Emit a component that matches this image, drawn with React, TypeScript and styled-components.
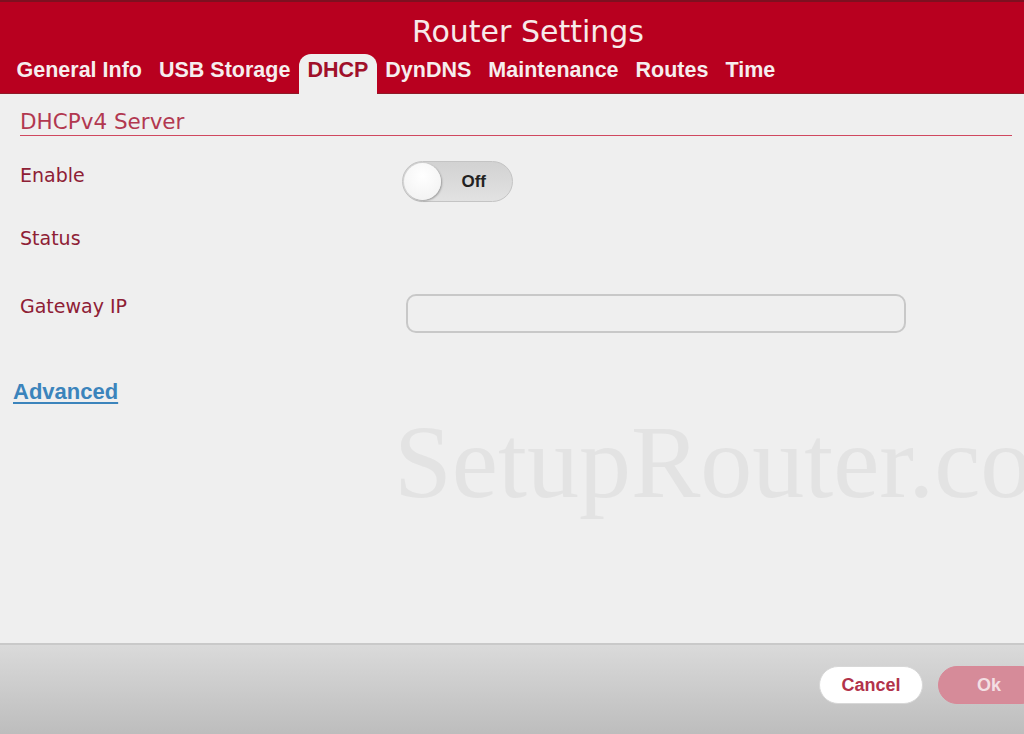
import React from 'react';
import styled, { createGlobalStyle } from 'styled-components';

const GlobalStyle = createGlobalStyle`
  html, body {
    margin: 0;
    padding: 0;
    height: 100%;
    background: #efefef;
    overflow: hidden;
  }
  #root {
    height: 100%;
  }
`;

const Page = styled.div`
  position: relative;
  display: flex;
  flex-direction: column;
  width: 1024px;
  height: 734px;
  overflow: hidden;
  background: #efefef;
`;

const Header = styled.header`
  display: flex;
  flex-direction: column;
  height: 94px;
  box-sizing: border-box;
  background: #b8001f;
  border-top: 2px solid #7d1020;
  border-bottom: 1px solid #8e1a28;
`;

const Title = styled.h1`
  margin: 0;
  padding: 11px 0 0 32px;
  height: 39px;
  box-sizing: border-box;
  text-align: center;
  font-family: 'DejaVu Sans', Verdana, sans-serif;
  font-weight: normal;
  font-size: 30px;
  line-height: 38px;
  color: #f7eaea;
`;

const Tabs = styled.nav`
  display: flex;
  align-items: flex-end;
  padding: 0 0 0 8px;
  margin-top: 13px;
  flex: 1;
`;

const Tab = styled.span<{ $active?: boolean }>`
  padding: 0 8.5px 7px;
  height: 40px;
  box-sizing: border-box;
  display: flex;
  align-items: center;
  font-family: 'Liberation Sans', Arial, sans-serif;
  font-weight: bold;
  font-size: 21.5px;
  color: ${p => (p.$active ? '#a0102a' : '#f6eeee')};
  background: ${p => (p.$active ? '#efefef' : 'transparent')};
  border-radius: ${p => (p.$active ? '12px 12px 0 0' : '0')};
  margin-bottom: -1px;
`;

const Content = styled.main`
  flex: 1;
  padding: 16px 12px 0 13px;
`;

const Section = styled.div`
  padding-left: 7px;
`;

const SectionTitle = styled.h2`
  margin: 0;
  font-family: 'DejaVu Sans', Verdana, sans-serif;
  font-weight: normal;
  font-size: 21.5px;
  line-height: 24px;
  color: #b23850;
  border-bottom: 1px solid #d0485f;
  padding-bottom: 1px;
`;

const Row = styled.div<{ $h: number; $pad?: number }>`
  display: grid;
  grid-template-columns: 382px 1fr;
  align-items: start;
  box-sizing: border-box;
  height: ${p => p.$h}px;
  padding-top: ${p => p.$pad ?? 0}px;
`;

const Label = styled.span<{ $top: number }>`
  font-family: 'DejaVu Sans', Verdana, sans-serif;
  font-size: 19px;
  line-height: 22px;
  color: #8e2035;
  padding-top: ${p => p.$top}px;
`;

const Toggle = styled.div`
  position: relative;
  width: 111px;
  height: 41px;
  box-sizing: border-box;
  border-radius: 21px;
  border: 1px solid #c4c4c4;
  background: linear-gradient(#d2d2d2, #e2e2e2);
  display: flex;
  align-items: center;
  justify-content: flex-end;
  padding-right: 26px;
  font-family: 'Liberation Sans', Arial, sans-serif;
  font-weight: bold;
  font-size: 17px;
  color: #222;
`;

const Knob = styled.span`
  position: absolute;
  left: 1px;
  top: 1px;
  width: 37px;
  height: 37px;
  border-radius: 50%;
  background: radial-gradient(circle at 50% 35%, #ffffff, #f0f0f0);
  box-shadow: 1px 1px 2px rgba(0, 0, 0, 0.3);
`;

const Input = styled.input`
  width: 500px;
  height: 39px;
  box-sizing: border-box;
  margin-left: 4px;
  border: 2px solid #c8c8c8;
  border-radius: 10px;
  background: #efefef;
  outline: none;
`;

const AdvancedLink = styled.a`
  display: inline-block;
  font-family: 'Liberation Sans', Arial, sans-serif;
  font-weight: bold;
  font-size: 22px;
  line-height: 24px;
  color: #3b84bc;
  text-decoration: underline;
  text-decoration-thickness: 2px;
  text-underline-offset: 3px;
`;

const Watermark = styled.div`
  position: absolute;
  left: 394px;
  top: 402px;
  font-family: 'Liberation Serif', 'Times New Roman', serif;
  font-size: 104px;
  color: #e3e3e3;
  white-space: nowrap;
  pointer-events: none;
`;

const Footer = styled.footer`
  height: 91px;
  box-sizing: border-box;
  border-top: 2px solid #c9c9c9;
  background: linear-gradient(#dadada, #bdbdbd);
  display: flex;
  justify-content: flex-end;
  align-items: flex-start;
  gap: 15px;
  padding-top: 21px;
  margin-right: -16px;
`;

const Button = styled.button<{ $primary?: boolean }>`
  height: 38px;
  width: ${p => (p.$primary ? '102px' : '104px')};
  border-radius: 19px;
  border: 1px solid ${p => (p.$primary ? '#d88998' : '#d8d8d8')};
  background: ${p => (p.$primary ? '#d68b99' : '#ffffff')};
  color: ${p => (p.$primary ? '#f3dfe3' : '#b2324a')};
  font-family: 'Liberation Sans', Arial, sans-serif;
  font-weight: bold;
  font-size: 18px;
`;

const tabs = ['General Info', 'USB Storage', 'DHCP', 'DynDNS', 'Maintenance', 'Routes', 'Time'];

export default function App() {
  return (
    <Page>
      <GlobalStyle />
      <Header>
        <Title>Router Settings</Title>
        <Tabs>
          {tabs.map(t => (
            <Tab key={t} $active={t === 'DHCP'}>
              {t}
            </Tab>
          ))}
        </Tabs>
      </Header>
      <Content>
        <Section>
          <SectionTitle>DHCPv4 Server</SectionTitle>
          <Row $h={91} $pad={25}>
            <Label $top={3}>Enable</Label>
            <Toggle>
              <Knob />
              Off
            </Toggle>
          </Row>
          <Row $h={67}>
            <Label $top={0}>Status</Label>
            <span />
          </Row>
          <Row $h={86}>
            <Label $top={1}>Gateway IP</Label>
            <Input />
          </Row>
        </Section>
        <AdvancedLink>Advanced</AdvancedLink>
      </Content>
      <Watermark>SetupRouter.co</Watermark>
      <Footer>
        <Button>Cancel</Button>
        <Button $primary>Ok</Button>
      </Footer>
    </Page>
  );
}
